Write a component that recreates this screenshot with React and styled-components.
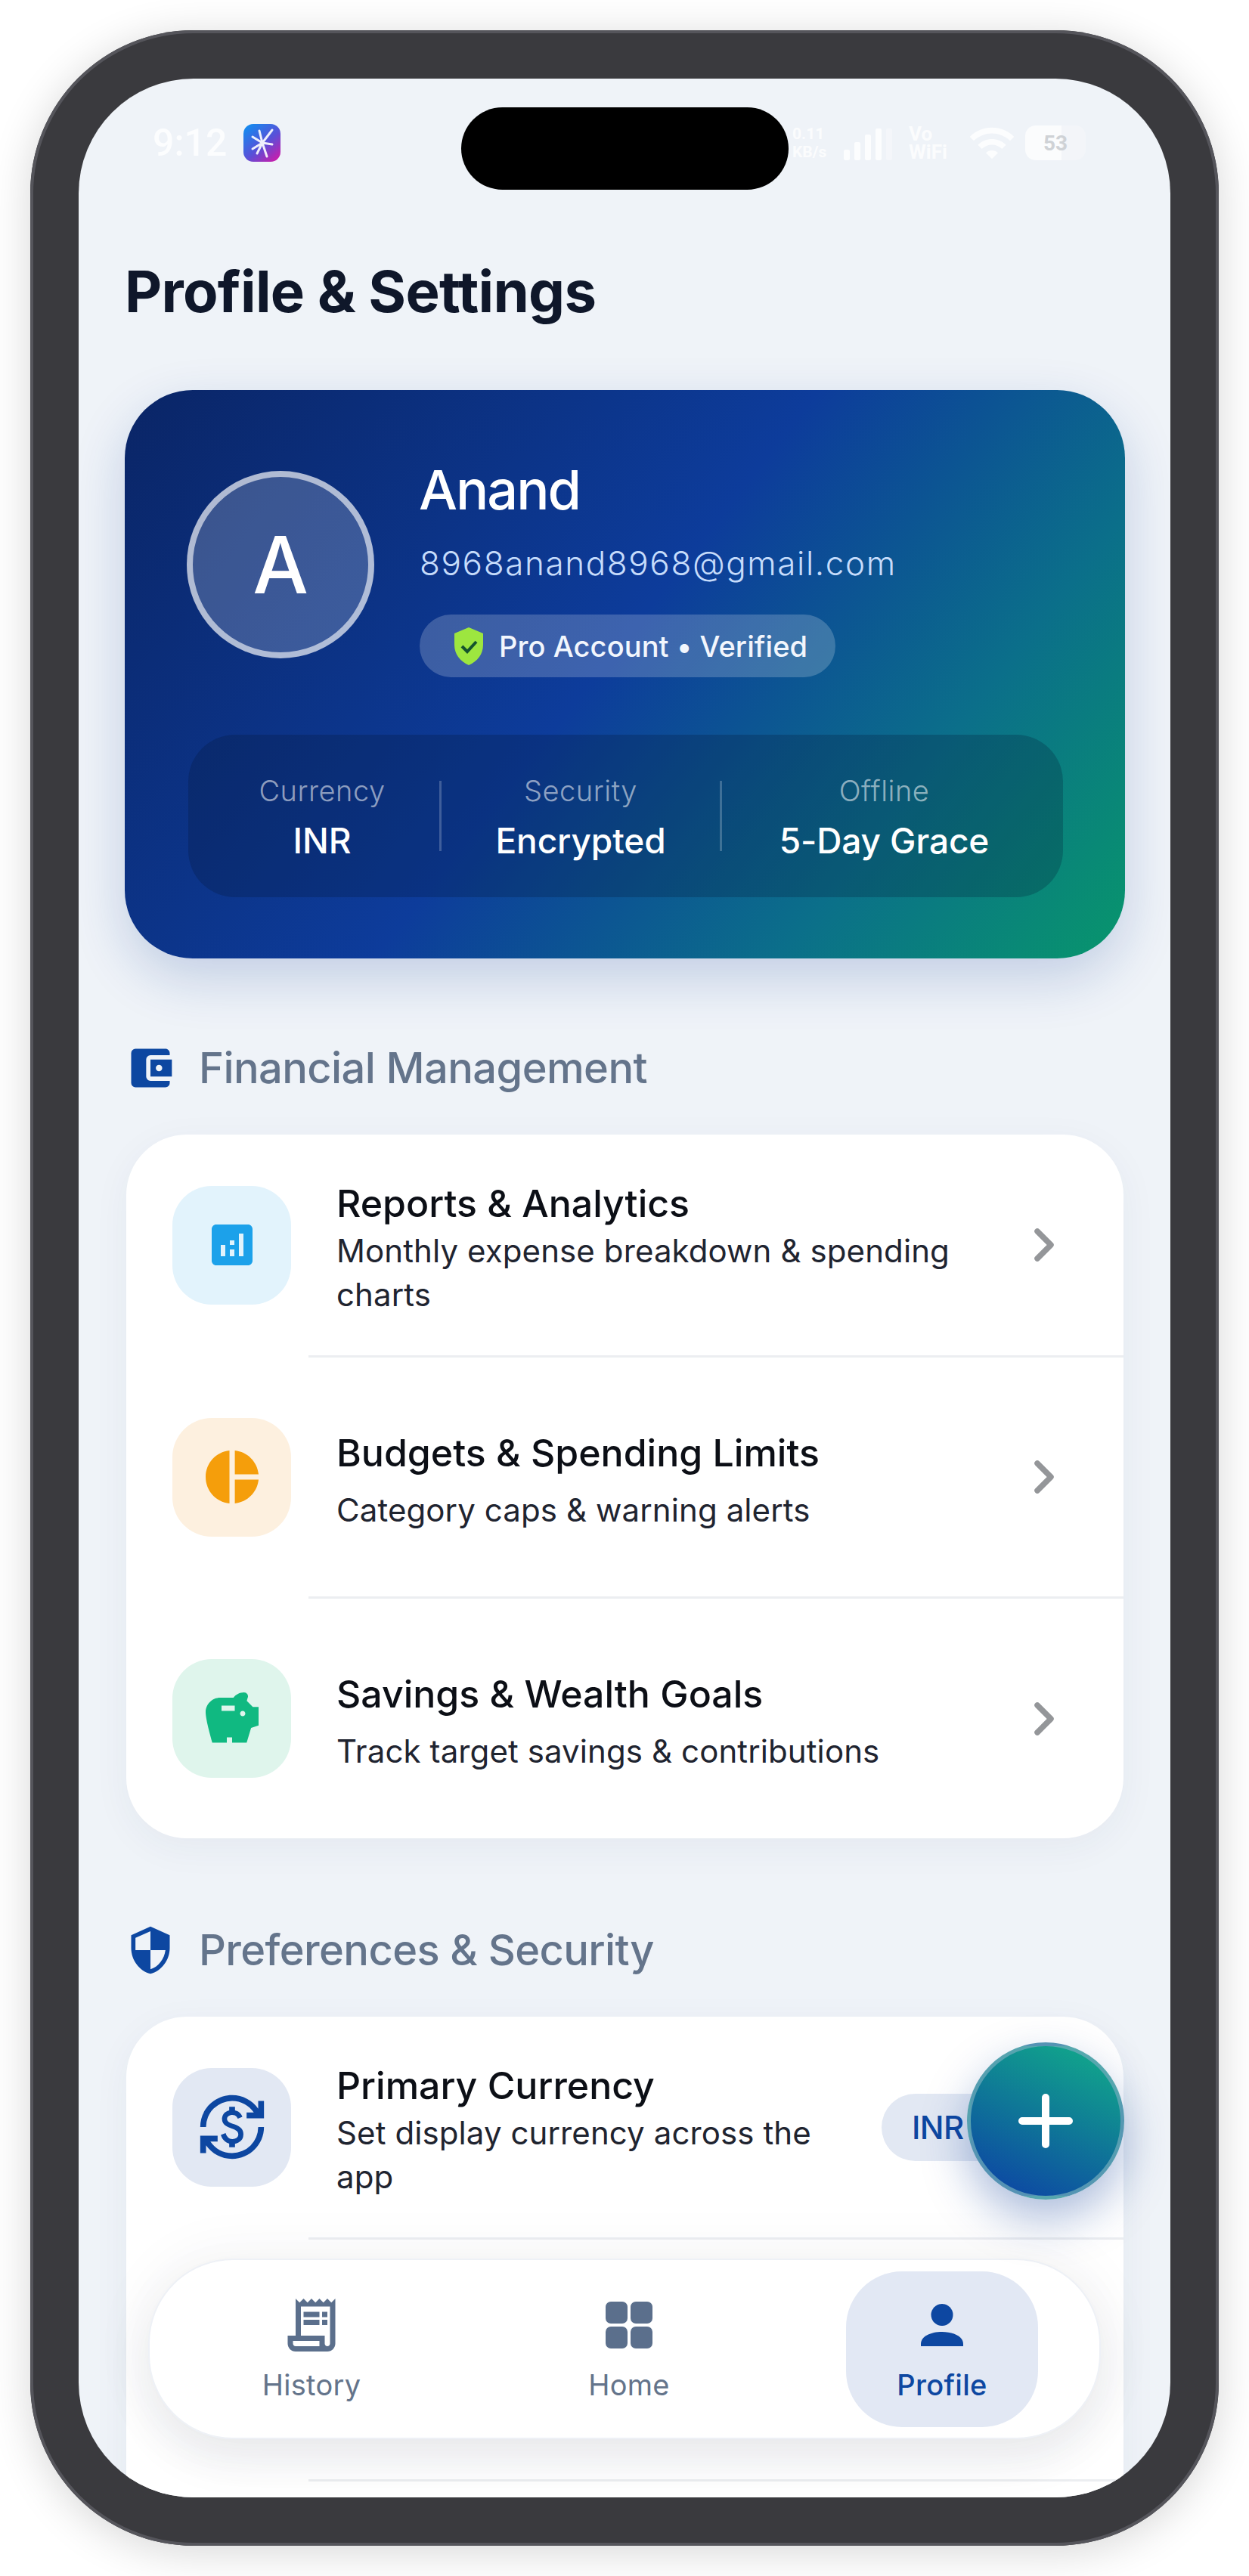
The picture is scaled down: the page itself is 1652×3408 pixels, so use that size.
import React from 'react';
import styled, { createGlobalStyle } from 'styled-components';
import {
  MdAccountBalanceWallet, MdAnalytics, MdPieChart, MdSavings, MdSecurity,
  MdCurrencyExchange, MdOutlineReceiptLong, MdWifi,
} from 'react-icons/md';

const Global = createGlobalStyle`
  html, body { margin: 0; padding: 0; background: #fff; }
  body { font-family: Inter, "Liberation Sans", sans-serif; width: 1652px; height: 3408px; overflow: hidden; }
  * { box-sizing: border-box; }
  svg { flex: none; }
`;

const Stage = styled.div`
  width: 1652px; height: 3408px; padding: 40px; background: #fff;
`;
const Frame = styled.div`
  width: 1572px; height: 3328px; padding: 64px;
  background: #3a3a3e; border-radius: 216px;
  box-shadow: inset 0 0 0 4px #55555b, 0 8px 56px rgba(0,0,0,.16);
`;
const Screen = styled.div`
  position: relative; width: 1444px; height: 3200px; overflow: hidden;
  border-radius: 152px; background: #eff3f8;
`;
const Notch = styled.div`
  position: absolute; left: 506px; top: 38px; width: 433px; height: 109px;
  border-radius: 55px; background: #000; z-index: 5;
`;
const StatusBar = styled.div`
  display: flex; align-items: center; justify-content: space-between;
  height: 48px; margin-top: 61px; padding: 0 112px 0 98px;
`;
const StatusLeft = styled.div`display: flex; align-items: center; gap: 22px;`;
const Clock = styled.span`
  font: 500 50px Roboto, sans-serif; color: rgba(255,255,255,.8);
`;
const AppBadge = styled.div`
  width: 49px; height: 50px; border-radius: 13px; display: flex; align-items: center; justify-content: center;
  background: linear-gradient(140deg, #0a93f2 0%, #5a50d8 55%, #dc14a4 100%);
`;
const StatusRight = styled.div`display: flex; align-items: center;`;
const Stacked = styled.div`
  display: flex; flex-direction: column; color: rgba(255,255,255,.8);
  font: 700 ${p => p.$size}px/24px Roboto, sans-serif; width: ${p => p.$w}px; margin-left: ${p => p.$ml}px;
`;
const Bars = styled.div`
  display: flex; align-items: flex-end; gap: 6px; height: 46px; margin-left: 16px;
`;
const Bar = styled.i`
  display: block; width: 8px; height: ${p => p.$h}px; border-radius: 2px;
  background: rgba(255,255,255,${p => p.$faint ? '.3' : '.8'});
`;
const WifiWrap = styled.div`
  display: flex; color: rgba(255,255,255,.8); margin-left: 6px;
`;
const Battery = styled.div`
  width: 80px; height: 46px; margin-left: 12px; border-radius: 14px;
  display: flex; align-items: center; justify-content: center;
  font: 700 28px Roboto, sans-serif; color: #cfd2d6;
  background: linear-gradient(90deg, #fbfcfd 60%, #f3f5f9 60%);
`;

const Scroll = styled.div`padding: 0 60px 0 61px;`;
const PageTitle = styled.h1`
  margin: 132px 0 0; padding-left: 0; font-size: 76px; line-height: 80px; font-weight: 700;
  letter-spacing: -.7px; color: #0f172a;
`;
const ProfileCard = styled.section`
  margin-top: 91px; height: 752px; padding: 92px 84px 0 82px; border-radius: 90px;
  background: linear-gradient(128deg, #0a2566 0%, #0d3c9b 48%, #0b6f8a 76%, #08966c 100%);
  box-shadow: 0 26px 70px rgba(13,60,150,.2);
`;
const ProfileRow = styled.div`display: flex; gap: 60px; height: 288px;`;
const Avatar = styled.div`
  flex: none; width: 248px; height: 248px; margin-top: 15px; border-radius: 50%;
  border: 8px solid rgba(255,255,255,.6); background: rgba(255,255,255,.2);
  display: flex; align-items: center; justify-content: center;
  font-size: 104px; font-weight: 500; color: #fff;
`;
const Info = styled.div`display: flex; flex-direction: column; align-items: flex-start;`;
const Name = styled.div`font-size: 72px; line-height: 80px; font-weight: 500; letter-spacing: -2px; margin-left: -1px; color: #fff;`;
const Email = styled.div`
  margin-top: 27px; font-size: 44px; line-height: 60px; font-weight: 300; letter-spacing: 1.6px; color: #c6dcfb;
`;
const Pill = styled.div`
  display: flex; align-items: center; gap: 20px; height: 83px; width: 550px; margin-top: 38px; padding-left: 45px;
  border-radius: 42px; background: rgba(255,255,255,.2);
  font-size: 38px; font-weight: 500; letter-spacing: .1px; color: #f2f6fd; white-space: nowrap;
`;
const StatsBar = styled.div`
  display: grid; grid-template-columns: 335px 371px 447px; margin: 76px -2px 0 2px; height: 215px; align-items: center;
  border-radius: 62px; background: rgba(5,20,50,.24);
`;
const Stat = styled.div`
  display: flex; flex-direction: column; align-items: center; height: 93px; justify-content: center; gap: 27px;
  padding: 0 ${p => p.$pr || 0}px 0 ${p => p.$pl || 0}px;
  &:not(:last-child) { border-right: 3px solid rgba(255,255,255,.22); }
`;
const StatLabel = styled.span`font-size: 38px; line-height: 38px; font-weight: 300; letter-spacing: .5px; color: rgba(255,255,255,.55);`;
const StatValue = styled.span`font-size: 46px; line-height: 40px; font-weight: 500; letter-spacing: -.1px; color: #fff;`;

const SectionHead = styled.div`
  display: flex; align-items: center; gap: 38px; height: 70px; margin-top: ${p => p.$top}px; padding-left: 7px;
  font-size: 56px; font-weight: 500; letter-spacing: -.6px; color: #64748b;
`;
const SectionIcon = styled.span`display: flex; width: 53px; justify-content: center; color: #0d47a1;`;
const ListCard = styled.div`
  margin: 53px 2px 0; border-radius: 80px; background: #fff; box-shadow: 0 12px 50px rgba(30,50,90,.05);
  height: ${p => p.$h ? `${p.$h}px` : 'auto'};
`;
const Row = styled.div`
  display: flex; align-items: center; height: ${p => p.$h}px; padding: 0 90px 0 61px;
`;
const RowIcon = styled.div`
  flex: none; width: 157px; height: 157px; border-radius: 52px; margin-right: 60px;
  display: flex; align-items: center; justify-content: center;
  background: ${p => p.$bg}; color: ${p => p.$fg};
`;
const RowText = styled.div`
  flex: 1; display: flex; flex-direction: column; gap: ${p => p.$gap}px; margin-top: ${p => p.$mt}px;
`;
const RowTitle = styled.div`font-size: 50px; line-height: 60px; font-weight: 500; letter-spacing: 0; color: #0c0f16;`;
const RowSub = styled.div`font-size: 42px; line-height: 58px; font-weight: 400; letter-spacing: .1px; color: #1f2430;`;
const Divider = styled.div`height: 3px; margin-left: 241px; background: #eceef1;`;
const ValuePill = styled.div`
  flex: none; width: 176px; height: 89px; margin: 0 54px 0 40px; padding-left: 40px; border-radius: 45px;
  display: flex; align-items: center; background: #e2e8f3;
  font-size: 42px; font-weight: 500; letter-spacing: -.6px; color: #0d47a1;
`;

const Fab = styled.button`
  position: absolute; left: 1175px; top: 2598px; width: 208px; height: 208px; padding: 0; border-radius: 50%;
  border: 5px solid rgba(110,170,185,.75); z-index: 4;
  display: flex; align-items: center; justify-content: center;
  background: linear-gradient(25deg, #0d4aa3 10%, #11a98a 95%);
  box-shadow: 0 26px 60px rgba(13,60,150,.34);
`;
const Nav = styled.nav`
  position: absolute; left: 92px; top: 2884px; width: 1260px; height: 239px; z-index: 3;
  display: grid; grid-template-columns: 428px 412px 416px; justify-items: center; align-items: center;
  background: #fff; border: 2px solid #eef1f6; border-radius: 112px;
  box-shadow: 0 26px 60px rgba(30,40,60,.08), 0 0 70px 16px rgba(40,50,70,.04);
`;
const NavItem = styled.div`
  width: 254px; height: 206px; padding-top: 6px; border-radius: 74px; display: flex; flex-direction: column; align-items: center; justify-content: center;
  gap: 20px; background: ${p => p.$active ? '#e2e8f4' : 'transparent'};
`;
const NavIcon = styled.div`
  height: 68px; display: flex; align-items: center; justify-content: center; color: ${p => p.$active ? '#0d47a1' : '#5b6f8c'};
`;
const NavLabel = styled.span`
  font-size: 38px; line-height: 50px; letter-spacing: .3px;
  font-weight: ${p => p.$active ? 500 : 400}; color: ${p => p.$active ? '#0d47a1' : '#64748b'};
`;

const Chevron = () => (
  <svg width="30" height="46" viewBox="0 0 30 46" fill="none">
    <path d="M6 5l18 18L6 41" stroke="#949699" strokeWidth="7.5" strokeLinecap="round" strokeLinejoin="round" />
  </svg>
);
const Shield = () => (
  <svg width="40" height="50" viewBox="0 0 40 50">
    <path d="M20 0L1 8v15c0 13 8 22 19 27 11-5 19-14 19-27V8L20 0z" fill="#9de63f" />
    <path d="M11 25l7 7 12-13" fill="none" stroke="#14532d" strokeWidth="4" />
  </svg>
);
const Spark = () => (
  <svg width="32" height="40" viewBox="0 0 32 40">
    <path d="M16 20L29 3M16 20L22 38M16 20L3 12M16 20L3 28M16 20L29 22M16 20L12 4M16 20L9 34" stroke="#fff" strokeWidth="3" strokeLinecap="round" opacity=".9" />
  </svg>
);
const Grid = () => (
  <svg width="62" height="62" viewBox="0 0 62 62" fill="currentColor">
    <rect x="0" y="0" width="29" height="29" rx="7" />
    <rect x="33" y="0" width="29" height="29" rx="7" />
    <rect x="0" y="33" width="29" height="29" rx="7" />
    <rect x="33" y="33" width="29" height="29" rx="7" />
  </svg>
);
const Person = () => (
  <svg width="56" height="56" viewBox="0 0 56 56" fill="currentColor">
    <circle cx="28" cy="14.5" r="14.5" />
    <path d="M0 56v-3c0-10 13-16 28-16s28 6 28 16v3z" />
  </svg>
);
const Plus = () => (
  <svg width="72" height="72" viewBox="0 0 72 72">
    <path d="M36 5v62M5 36h62" stroke="#fff" strokeWidth="10" strokeLinecap="round" />
  </svg>
);

const finance = [
  { h: 292, gap: 4, mt: 10, bg: '#e2f3fc', fg: '#1ca1ea', icon: <MdAnalytics size={72} />, title: 'Reports & Analytics', sub: 'Monthly expense breakdown & spending charts' },
  { h: 319, gap: 17, mt: 10, bg: '#fdf0df', fg: '#f59e0b', icon: <MdPieChart size={84} />, title: 'Budgets & Spending Limits', sub: 'Category caps & warning alerts' },
  { h: 320, gap: 17, mt: 10, bg: '#dff5ec', fg: '#10b981', icon: <MdSavings size={84} />, title: 'Savings & Wealth Goals', sub: 'Track target savings & contributions' },
];

export default function App() {
  return (
    <Stage>
      <Global />
      <Frame>
        <Screen>
          <Notch />
          <StatusBar>
            <StatusLeft>
              <Clock>9:12</Clock>
              <AppBadge><Spark /></AppBadge>
            </StatusLeft>
            <StatusRight>
              <Stacked $size={21} $w={52} $ml={0}><span>0.11</span><span>KB/s</span></Stacked>
              <Bars><Bar $h={14} /><Bar $h={24} /><Bar $h={34} /><Bar $h={42} /><Bar $faint $h={42} /></Bars>
              <Stacked $size={26} $w={72} $ml={22}><span>Vo</span><span>WiFi</span></Stacked>
              <WifiWrap><MdWifi size={64} /></WifiWrap>
              <Battery>53</Battery>
            </StatusRight>
          </StatusBar>
          <Scroll>
            <PageTitle>Profile &amp; Settings</PageTitle>
            <ProfileCard>
              <ProfileRow>
                <Avatar>A</Avatar>
                <Info>
                  <Name>Anand</Name>
                  <Email>8968anand8968@gmail.com</Email>
                  <Pill><Shield />Pro Account • Verified</Pill>
                </Info>
              </ProfileRow>
              <StatsBar>
                <Stat $pl={22}><StatLabel>Currency</StatLabel><StatValue>INR</StatValue></Stat>
                <Stat><StatLabel>Security</StatLabel><StatValue>Encrypted</StatValue></Stat>
                <Stat $pr={18}><StatLabel>Offline</StatLabel><StatValue>5-Day Grace</StatValue></Stat>
              </StatsBar>
            </ProfileCard>

            <SectionHead $top={110}>
              <SectionIcon><MdAccountBalanceWallet size={68} /></SectionIcon>
              Financial Management
            </SectionHead>
            <ListCard>
              {finance.map((r, i) => (
                <React.Fragment key={r.title}>
                  {i > 0 && <Divider />}
                  <Row $h={r.h - (i > 0 ? 3 : 0)}>
                    <RowIcon $bg={r.bg} $fg={r.fg}>{r.icon}</RowIcon>
                    <RowText $gap={r.gap} $mt={r.mt}>
                      <RowTitle>{r.title}</RowTitle>
                      <RowSub>{r.sub}</RowSub>
                    </RowText>
                    <Chevron />
                  </Row>
                </React.Fragment>
              ))}
            </ListCard>

            <SectionHead $top={113}>
              <SectionIcon><MdSecurity size={68} /></SectionIcon>
              Preferences &amp; Security
            </SectionHead>
            <ListCard $h={700}>
              <Row $h={292}>
                <RowIcon $bg="#e2e8f3" $fg="#0d47a1"><MdCurrencyExchange size={92} /></RowIcon>
                <RowText $gap={4} $mt={10}>
                  <RowTitle>Primary Currency</RowTitle>
                  <RowSub>Set display currency across the app</RowSub>
                </RowText>
                <ValuePill>INR</ValuePill>
              </Row>
              <Divider />
              <Row $h={317} />
              <Divider />
            </ListCard>
          </Scroll>
          <Fab aria-label="Add"><Plus /></Fab>
          <Nav>
            <NavItem>
              <NavIcon><MdOutlineReceiptLong size={84} /></NavIcon>
              <NavLabel>History</NavLabel>
            </NavItem>
            <NavItem>
              <NavIcon><Grid /></NavIcon>
              <NavLabel>Home</NavLabel>
            </NavItem>
            <NavItem $active>
              <NavIcon $active><Person /></NavIcon>
              <NavLabel $active>Profile</NavLabel>
            </NavItem>
          </Nav>
        </Screen>
      </Frame>
    </Stage>
  );
}
